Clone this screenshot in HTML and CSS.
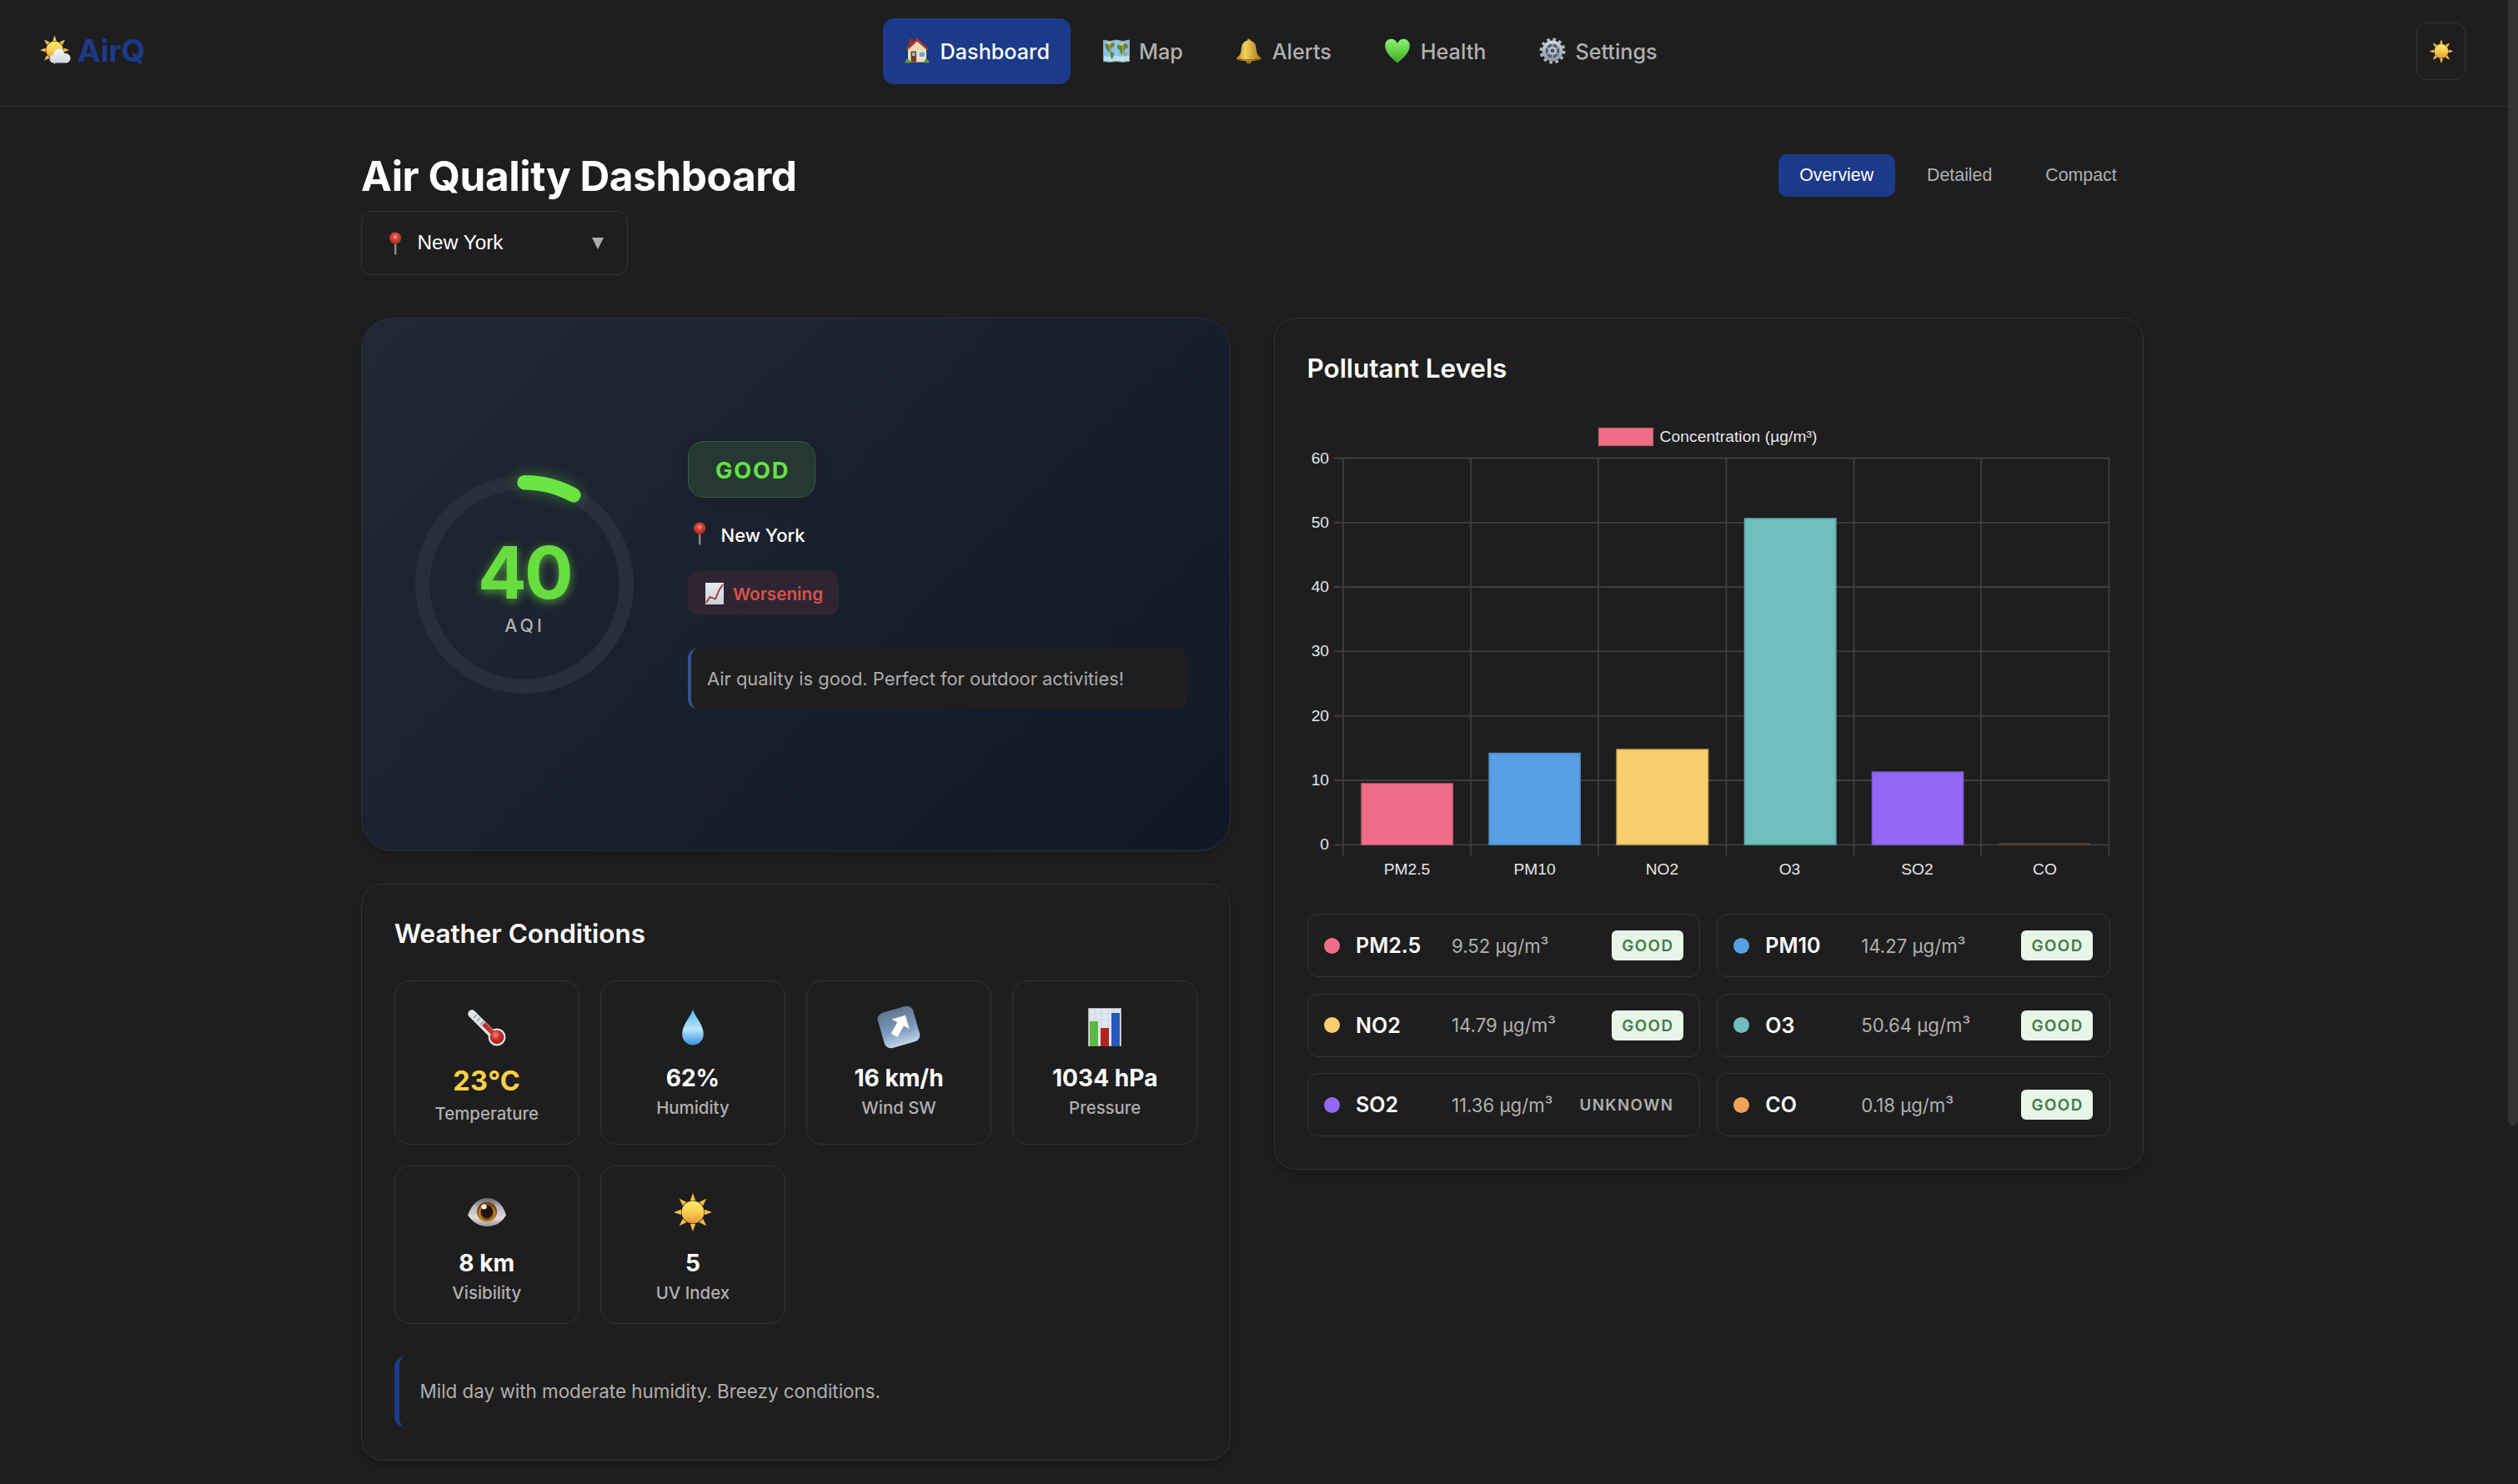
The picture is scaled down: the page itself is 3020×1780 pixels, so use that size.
FILE: index.html
```
<!DOCTYPE html>
<html lang="en">
<head>
<meta charset="utf-8">
<title>AirQ - Air Quality Dashboard</title>
<link rel="stylesheet" href="styles.css">
</head>
<body>
<svg class="defs" width="0" height="0" aria-hidden="true">
  <defs>
    <linearGradient id="sunFill" x1="0" y1="0" x2="0" y2="1"><stop offset="0" stop-color="#fdea6c"/><stop offset=".5" stop-color="#f8cf4f"/><stop offset="1" stop-color="#e8943a"/></linearGradient>
    <linearGradient id="cloudFill" x1="0" y1="0" x2="0" y2="1"><stop offset="0" stop-color="#f6f8fa"/><stop offset="1" stop-color="#cfd6df"/></linearGradient>
    <linearGradient id="bellFill" x1="0" y1="0" x2="1" y2="0"><stop offset="0" stop-color="#b8871f"/><stop offset=".35" stop-color="#f1d15a"/><stop offset="1" stop-color="#a87718"/></linearGradient>
    <linearGradient id="heartFill" x1="0" y1="0" x2="0" y2="1"><stop offset="0" stop-color="#8cf07a"/><stop offset=".5" stop-color="#63d148"/><stop offset="1" stop-color="#41a52c"/></linearGradient>
    <linearGradient id="gearFill" x1="0" y1="0" x2="0" y2="1"><stop offset="0" stop-color="#c9d2dc"/><stop offset="1" stop-color="#8d97a3"/></linearGradient>
    <radialGradient id="pinFill" cx=".5" cy=".4" r=".6"><stop offset="0" stop-color="#f7a79c"/><stop offset=".35" stop-color="#dc4c40"/><stop offset="1" stop-color="#9c2620"/></radialGradient>
    <radialGradient id="bulbFill" cx=".4" cy=".35" r=".65"><stop offset="0" stop-color="#f58a80"/><stop offset=".5" stop-color="#cf2f2c"/><stop offset="1" stop-color="#9c1d1c"/></radialGradient>
    <linearGradient id="dropFill" x1="0" y1="0" x2="0" y2="1"><stop offset="0" stop-color="#4fb0ee"/><stop offset=".55" stop-color="#b9e6fb"/><stop offset="1" stop-color="#3a93e6"/></linearGradient>
    <linearGradient id="tileFill" x1="0" y1="0" x2="0" y2="1"><stop offset="0" stop-color="#61778f"/><stop offset=".6" stop-color="#7f9cc0"/><stop offset="1" stop-color="#c4d6ea"/></linearGradient>
    <linearGradient id="paperFill" x1="0" y1="0" x2="0" y2="1"><stop offset="0" stop-color="#e6ecf4"/><stop offset="1" stop-color="#c9d0d8"/></linearGradient>
    <linearGradient id="eyeFill" x1="0" y1="0" x2="0" y2="1"><stop offset="0" stop-color="#67636c"/><stop offset=".3" stop-color="#b8b1b9"/><stop offset=".7" stop-color="#e2dadf"/><stop offset="1" stop-color="#9d949b"/></linearGradient>
    <radialGradient id="irisFill" cx=".5" cy=".6" r=".5"><stop offset=".4" stop-color="#4b2413"/><stop offset=".75" stop-color="#c48c22"/><stop offset="1" stop-color="#6f4310"/></radialGradient>
    <symbol id="sun" viewBox="0 0 48 48">
      <g fill="#f3be48"><path d="M24 1l3.200 9h-6.400z"/><path d="M24 1l3.200 9h-6.400z" transform="rotate(45 24 24)"/><path d="M24 1l3.200 9h-6.400z" transform="rotate(90 24 24)"/><path d="M24 1l3.200 9h-6.400z" transform="rotate(135 24 24)"/><path d="M24 1l3.200 9h-6.400z" transform="rotate(180 24 24)"/><path d="M24 1l3.200 9h-6.400z" transform="rotate(225 24 24)"/><path d="M24 1l3.200 9h-6.400z" transform="rotate(270 24 24)"/><path d="M24 1l3.200 9h-6.400z" transform="rotate(315 24 24)"/></g>
      <circle cx="24" cy="24" r="13.500" fill="url(#sunFill)"/>
    </symbol>
    <symbol id="pin" viewBox="0 0 16 28">
      <rect x="7" y="12" width="2.400" height="15.500" rx="1" fill="#948a83"/>
      <circle cx="8.100" cy="7.600" r="7.200" fill="url(#pinFill)"/>
    </symbol>
  </defs>
</svg>

<header class="topbar">
  <a class="logo">
    <svg class="logo-icon" viewBox="0 0 37 37">
      <svg x="-1" y="-1" width="37" height="38"><use href="#sun"/></svg>
      <path d="M17 33.500c-3.500 0-5.500-2.200-5.500-5 0-2.900 2.200-4.900 4.700-5 .2-4 2.800-7 6.600-7 3.300 0 5.600 2.100 6.300 5.200 4.100-.1 7.400 2.400 7.400 6 0 3.500-2.600 5.800-6 5.800z" fill="url(#cloudFill)"/>
    </svg>
    <span class="logo-text">AirQ</span>
  </a>
  <nav class="nav">
    <a class="nav-item active">
      <svg class="nav-icon" viewBox="0 0 32 32">
        <path d="M6 2h5v9H6z" fill="#8f3227"/>
        <path d="M5 14L16 4l11 10v15.500H5z" fill="#ecdcbb"/>
        <path d="M16 .800L2.500 13.800l1.800 1.500L16 4.800l12 10.500 1.600-1.500z" fill="#b23a2c"/>
        <path d="M8.500 16.500H15v13H8.500z" fill="#74402c"/><path d="M10 18h3.500v4H10z" fill="#9dbbd0"/>
        <path d="M17.500 16.500H26v7.500h-8.500z" fill="#fff3df"/><path d="M18.500 17.500H25V23h-6.500z" fill="#6fa4d8"/>
        <path d="M1.500 30.500c0-3 1.800-5 3.600-4.600 1.600.3 2.400 2 2.400 4.600zM24.500 30.500c0-3 1.200-4.900 3-4.600 1.900.3 3.200 2 3.200 4.600z" fill="#5c9a34"/>
      </svg>
      <span>Dashboard</span>
    </a>
    <a class="nav-item">
      <svg class="nav-icon" viewBox="0 0 32 32">
        <path d="M.500 3l7.700 1.500L16 3l7.800 1.500L31.500 3v25.500l-7.700.8-7.800-.8-7.800.8-7.700-.8z" fill="#7cc4ee"/>
        <path d="M.500 22l7.700 1 7.800-1 7.800 1 7.700-1v6.500l-7.700.8-7.800-.8-7.800.8-7.700-.8z" fill="#b5e3f8"/>
        <path d="M2 8l6-2 6 1-1 4-3 1-1 4 4 3-1 5-2 2-2-7-4-5zM17 9l6-3 6 2 1 4-4 2-1 4-3 3-2-6-3-2z" fill="#6f7f2c"/>
        <path d="M3 6l5-1 3 1-4 3zM18 8l5-2 3 1-4 3z" fill="#c9c9a4"/>
        <circle cx="26.500" cy="20" r="2" fill="#df8b32"/>
        <path d="M8.200 4.500v24.800M16 3v25.500M23.800 4.500v24.800" stroke="#dcecf4" stroke-width=".8" opacity=".7"/>
        <path d="M.500 3l7.700 1.500L16 3l7.800 1.500L31.500 3v25.500l-7.700.8-7.800-.8-7.800.8-7.700-.8z" fill="none" stroke="#a99f89" stroke-width="1"/>
      </svg>
      <span>Map</span>
    </a>
    <a class="nav-item">
      <svg class="nav-icon" viewBox="0 0 32 32">
        <circle cx="15.800" cy="3.500" r="2" fill="#c79a31"/>
        <circle cx="15.800" cy="28" r="3.400" fill="#a0701a"/>
        <path d="M15.800 3.500c5.600 0 8.600 4.300 9 10 .3 5 1.200 7.700 5.600 11 1 1.800-4.600 3.500-14.600 3.500S.200 26.300 1.200 24.500c4.400-3.300 5.300-6 5.600-11 .4-5.700 3.400-10 9-10z" fill="url(#bellFill)"/>
        <path d="M3.500 25.300c5 2.200 19.600 2.200 24.600 0" fill="none" stroke="#80590f" stroke-width="1.200"/>
      </svg>
      <span>Alerts</span>
    </a>
    <a class="nav-item">
      <svg class="nav-icon" viewBox="0 0 32 32">
        <path d="M16 30.500C8.500 24.500 1.200 17.800 1.200 9.800c0-4.600 3.200-8 7.300-8 3.300 0 6 1.900 7.500 5.100 1.500-3.200 4.200-5.100 7.500-5.100 4.100 0 7.300 3.400 7.300 8 0 8-7.300 14.700-14.800 20.700z" fill="url(#heartFill)"/>
      </svg>
      <span>Health</span>
    </a>
    <a class="nav-item">
      <svg class="nav-icon" viewBox="0 0 32 32">
        <circle cx="16" cy="16" r="13.600" fill="none" stroke="#aeb8c3" stroke-width="3.800" stroke-dasharray="3.560 3.560"/>
        <circle cx="16" cy="16" r="10.400" fill="none" stroke="url(#gearFill)" stroke-width="4.200"/>
        <circle cx="16" cy="16" r="8" fill="#59626d"/>
        <path d="M16 8v16M9 12l14 8M23 12L9 20" stroke="#a3adb8" stroke-width="1.600"/>
        <circle cx="16" cy="16" r="5" fill="#b8c1cc"/><circle cx="16" cy="16" r="2.400" fill="#4a525c"/>
      </svg>
      <span>Settings</span>
    </a>
  </nav>
  <button class="theme-toggle" aria-label="Theme"><svg width="30" height="31"><use href="#sun"/></svg></button>
</header>

<main class="main">
  <div class="page-head">
    <div class="page-title">
      <h1>Air Quality Dashboard</h1>
      <div class="select">
        <svg class="pin" width="16" height="28"><use href="#pin"/></svg>
        <span class="select-value">New York</span>
        <svg class="caret" viewBox="0 0 14 14"><path d="M0 0h14L7 14z" fill="#aeaeae"/></svg>
      </div>
    </div>
    <div class="tabs">
      <button class="tab active">Overview</button>
      <button class="tab">Detailed</button>
      <button class="tab">Compact</button>
    </div>
  </div>

  <div class="grid">
    <div class="column">
      <section class="card aqi">
        <div class="gauge">
          <svg class="ring" viewBox="0 0 262 262">
            <circle cx="131" cy="131" r="122.300" fill="none" stroke="#282e3b" stroke-width="17.400"/>
            <path class="ring-value" d="M131 8.700A122.300 122.300 0 0 1 189.900 23.800" fill="none" stroke="#6ae544" stroke-width="17.400" stroke-linecap="round"/>
          </svg>
          <div class="gauge-label">
            <div class="aqi-number">40</div>
            <div class="aqi-unit">AQI</div>
          </div>
        </div>
        <div class="aqi-details">
          <div class="level">GOOD</div>
          <div class="place"><svg class="pin" width="16" height="28"><use href="#pin"/></svg><span>New York</span></div>
          <div class="trend">
            <svg class="trend-icon" viewBox="0 0 22 26"><rect width="22" height="26" fill="url(#paperFill)"/><path d="M1 24l4.500-7 6.500 2.500L16.500 9 21 2" fill="none" stroke="#a8322b" stroke-width="1.800"/></svg>
            <span>Worsening</span>
          </div>
          <div class="advice">Air quality is good. Perfect for outdoor activities!</div>
        </div>
      </section>

      <section class="card weather">
        <h2>Weather Conditions</h2>
        <div class="tiles">
          <div class="tile temp">
            <svg class="tile-icon" viewBox="0 0 48 48">
              <path d="M6 8L32 34" stroke="#dde2e8" stroke-width="9.500" stroke-linecap="round"/>
              <circle cx="36" cy="36" r="10.500" fill="#dde2e8"/>
              <path d="M20 20L34 34" stroke="#c3322e" stroke-width="5.500"/>
              <path d="M8 13l4-4M12 17l4-4M16 21l4-4" stroke="#8a9098" stroke-width="1.200"/>
              <circle cx="36" cy="36" r="8.300" fill="url(#bulbFill)"/>
            </svg>
            <div class="tile-value">23°C</div><div class="tile-label">Temperature</div>
          </div>
          <div class="tile">
            <svg class="tile-icon" viewBox="0 0 48 48"><path d="M24 2.500c2 8.500 12.800 18.500 12.800 29.500 0 8-5.700 13.500-12.800 13.500S11.200 40 11.200 32C11.200 21 22 11 24 2.500z" fill="url(#dropFill)"/></svg>
            <div class="tile-value">62%</div><div class="tile-label">Humidity</div>
          </div>
          <div class="tile">
            <svg class="tile-icon wide" viewBox="0 0 54 54">
              <g transform="rotate(-16 27 27)"><rect x="5" y="5" width="44" height="44" rx="8" fill="url(#tileFill)"/><path d="M38.500 15.500v17l-5.400-5.400-11 11-6.200-6.200 11-11-5.400-5.400z" fill="#fff"/></g>
            </svg>
            <div class="tile-value">16 km/h</div><div class="tile-label">Wind SW</div>
          </div>
          <div class="tile">
            <svg class="tile-icon" viewBox="0 0 48 48">
              <rect x="4" y="1" width="40" height="46" fill="#dfe7f1"/><path d="M4 8h40M4 15h40M4 22h40M4 29h40M4 36h40M12 1v46M20 1v46M28 1v46M36 1v46" stroke="#c6d0dd" stroke-width=".7"/>
              <rect x="4.500" y="1.500" width="39" height="45" fill="none" stroke="#b0a7a5"/>
              <rect x="6" y="17" width="10" height="30" fill="#58b944"/><rect x="19" y="25" width="10" height="22" fill="#b0261e"/><rect x="32" y="7" width="10" height="40" fill="#2459bd"/>
            </svg>
            <div class="tile-value">1034 hPa</div><div class="tile-label">Pressure</div>
          </div>
          <div class="tile">
            <svg class="tile-icon" viewBox="0 0 48 48">
              <path d="M1 27.500C6 14 14 7 24.500 7S43 14 47 27.500C42 36 34.500 41 24.500 41S7 36 1 27.500z" fill="url(#eyeFill)"/>
              <circle cx="24" cy="23.500" r="12" fill="url(#irisFill)"/><circle cx="24" cy="23" r="7.400" fill="#25120f"/><ellipse cx="20.500" cy="17.500" rx="3.300" ry="3" fill="#f1edf0"/>
            </svg>
            <div class="tile-value">8 km</div><div class="tile-label">Visibility</div>
          </div>
          <div class="tile">
            <svg class="tile-icon" viewBox="0 0 48 48"><use href="#sun"/></svg>
            <div class="tile-value">5</div><div class="tile-label">UV Index</div>
          </div>
        </div>
        <div class="summary">Mild day with moderate humidity. Breezy conditions.</div>
      </section>
    </div>

    <section class="card pollutants">
      <h2>Pollutant Levels</h2>
      <svg class="chart" viewBox="1567.500 500 963 563">
        <rect x="1917" y="513.500" width="65" height="21" fill="#ef6e87" stroke="#bb5a6e" stroke-width="1.200"/>
        <text x="1990" y="530.300" textLength="189">Concentration (µg/m³)</text>
        <g stroke="#3e3e3e" stroke-width="1.800">
          <path d="M1599 549.500H2529M1599 626.800H2529M1599 704H2529M1599 781.300H2529M1599 858.700H2529M1599 936H2529M1599 1013.300H2529"/>
          <path d="M1610.500 549V1026M1763.500 549V1026M1916.500 549V1026M2070 549V1026M2223 549V1026M2375.500 549V1026M2529 549V1026"/>
        </g>
        <g class="ticks">
          <text x="1593.500" y="555.500">60</text><text x="1593.500" y="632.700">50</text><text x="1593.500" y="710">40</text><text x="1593.500" y="787.200">30</text><text x="1593.500" y="864.500">20</text><text x="1593.500" y="941.800">10</text><text x="1593.500" y="1019.200">0</text>
        </g>
        <g stroke-width="1.600">
          <path d="M1632.600 1013V940H1741.600V1013z" fill="#ef6e87" stroke="#cf6278"/>
          <path d="M1785.600 1013V903.600H1894.600V1013z" fill="#589fe4" stroke="#4f8bc6"/>
          <path d="M1938.600 1013V899H2048V1013z" fill="#f7cf6c" stroke="#c7a95d"/>
          <path d="M2092 1013V622H2201.400V1013z" fill="#6fbec0" stroke="#62a5a7"/>
          <path d="M2245 1013V926H2354V1013z" fill="#9268f5" stroke="#7f5dd0"/>
          <path d="M2397 1012H2507" stroke="#584634"/>
        </g>
        <g class="names">
          <text x="1687" y="1049">PM2.5</text><text x="1840" y="1049">PM10</text><text x="1993" y="1049">NO2</text><text x="2146" y="1049">O3</text><text x="2299" y="1049">SO2</text><text x="2452" y="1049">CO</text>
        </g>
      </svg>
      <div class="list">
        <div class="row"><i class="dot pink"></i><b>PM2.5</b><span class="amount">9.52 µg/m³</span><em class="badge good">GOOD</em></div>
        <div class="row"><i class="dot blue"></i><b>PM10</b><span class="amount">14.27 µg/m³</span><em class="badge good">GOOD</em></div>
        <div class="row"><i class="dot yellow"></i><b>NO2</b><span class="amount">14.79 µg/m³</span><em class="badge good">GOOD</em></div>
        <div class="row"><i class="dot teal"></i><b>O3</b><span class="amount">50.64 µg/m³</span><em class="badge good">GOOD</em></div>
        <div class="row"><i class="dot purple"></i><b>SO2</b><span class="amount">11.36 µg/m³</span><em class="badge">UNKNOWN</em></div>
        <div class="row"><i class="dot orange"></i><b>CO</b><span class="amount">0.18 µg/m³</span><em class="badge good">GOOD</em></div>
      </div>
    </section>
  </div>
</main>
<div class="scroll-thumb"></div>
</body>
</html>
```

FILE: styles.css
```
* { box-sizing: border-box; }
html, body { height: 100%; }
body {
  margin: 0;
  overflow: hidden;
  background: #1e1e1e;
  color: #fff;
  font-family: Inter, "Liberation Sans", sans-serif;
}
h1, h2 { margin: 0; }
svg { display: block; flex: none; }
.defs { position: absolute; }
button { border: 0; padding: 0; background: none; font: inherit; }

.topbar {
  display: flex;
  align-items: center;
  justify-content: space-between;
  width: 3008px;
  height: 128px;
  padding: 0 51px 4px 48px;
  border-bottom: 1px solid #333;
}
.logo { display: flex; align-items: center; gap: 8px; margin-top: -2px; }
.logo-icon { width: 37px; height: 37px; }
.logo-text { color: #1b3a8a; font-size: 37px; font-weight: 700; line-height: 50px; letter-spacing: -0.2px; }
.nav { display: flex; gap: 12.800px; }
.nav-item {
  display: flex;
  align-items: center;
  gap: 11.400px;
  height: 79px;
  padding: 0 25.400px;
  border-radius: 13px;
  color: #b0b0b0;
  font-size: 25.200px;
  font-weight: 500;
}
.nav-item.active { background: #1b3a8a; color: #fff; }
.nav-icon { width: 32px; height: 32px; margin-top: -2px; }
.theme-toggle {
  display: flex;
  align-items: center;
  justify-content: center;
  width: 59px;
  height: 69px;
  border: 1px solid #333;
  border-radius: 13px;
}

.main { width: 2137.500px; margin-left: 433px; padding-top: 52px; }
.page-head { display: flex; justify-content: space-between; align-items: flex-start; margin-bottom: 51px; }
.page-title { display: flex; flex-direction: column; gap: 11px; }
h1 { font-size: 49.500px; line-height: 62px; font-weight: 700; letter-spacing: -0.450px; }
.select {
  display: flex;
  align-items: center;
  width: 320px;
  height: 77px;
  padding: 0 28.500px 0 32px;
  border: 1px solid #333;
  border-radius: 13px;
  font-family: "Liberation Sans", sans-serif;
  font-size: 24.400px;
}
.select-value { margin: -2px 0 0 18.500px; }
.caret { width: 14px; height: 14px; margin-left: auto; }
.tabs {
  display: flex;
  gap: 13px;
  padding: 5px 6.300px 0 0;
  font-family: "Liberation Sans", sans-serif;
  font-size: 21.330px;
}
.tab { height: 51px; padding: 0 25.500px; border-radius: 10px; color: #b0b0b0; }
.tab.active { background: #1b3a8a; color: #fff; }

.grid { display: grid; grid-template-columns: 1043px 1043px; gap: 51.500px; align-items: start; }
.column { display: flex; flex-direction: column; gap: 39px; }
.card {
  border: 1px solid #333;
  border-radius: 26px;
  background: #1e1e1e;
  box-shadow: 0 6px 10px rgba(0, 0, 0, .2);
}
.card h2 { font-size: 31.500px; line-height: 49px; font-weight: 600; letter-spacing: -.05px; }

.aqi {
  display: flex;
  align-items: center;
  gap: 65px;
  height: 640px;
  padding: 0 51px 0 64px;
  border-color: #2b303b;
  border-radius: 38px;
  background: linear-gradient(135deg, #212934, #1a1f2e 50%, #111727);
}
.gauge { display: grid; width: 262px; height: 262px; flex: none; }
.gauge > * { grid-area: 1 / 1; }
.ring { width: 262px; height: 262px; overflow: visible; }
.ring-value { filter: drop-shadow(0 0 9px rgba(106, 229, 68, .4)); }
.gauge-label { display: flex; flex-direction: column; align-items: center; padding-top: 68px; }
.aqi-number {
  color: #68dd40;
  font-size: 87px;
  line-height: 98px;
  font-weight: 700;
  letter-spacing: -2.700px;
  text-shadow: 0 3px 12px rgba(104, 221, 64, .65);
}
.aqi-unit { padding-left: 1px; color: #b0b0b0; font-size: 21.300px; line-height: 28px; font-weight: 500; letter-spacing: 4px; }
.aqi-details { display: flex; flex-direction: column; align-items: flex-start; flex: 1; padding-bottom: 22px; }
.level {
  height: 68px;
  padding: 0 30px 0 32px;
  border: 1px solid #31603a;
  border-radius: 19px;
  background: #263834;
  box-shadow: 0 6px 18px rgba(0, 0, 0, .1);
  color: #68e044;
  font-size: 27.200px;
  line-height: 69px;
  font-weight: 700;
  letter-spacing: 1.800px;
}
.place { display: flex; align-items: center; gap: 17.500px; height: 44px; margin: 23px 0 21px; padding-left: 6px; font-size: 22px; font-weight: 500; }
.place .pin { margin-top: -4px; }
.trend {
  display: flex;
  align-items: center;
  gap: 11px;
  height: 53px;
  padding: 0 18.500px 0 21px;
  border-radius: 13px;
  background: #2f2432;
  color: #dd5049;
  font-size: 20.700px;
  line-height: 26px;
  font-weight: 600;
}
.trend span { padding-top: 2px; }
.trend-icon { width: 22px; height: 26px; }
.advice {
  width: 100%;
  height: 74px;
  margin-top: 39px;
  padding-left: 19px;
  border-left: 4px solid #34508f;
  border-radius: 13px;
  background: #1e1e1e;
  color: #adadad;
  font-size: 21.900px;
  line-height: 74px;
}

.weather { height: 692px; padding: 34px 39px 0; }
.tiles { display: grid; grid-template-columns: repeat(4, 1fr); gap: 25.600px; margin-top: 32px; }
.tile {
  display: flex;
  flex-direction: column;
  align-items: center;
  padding: 31px 0 22.500px;
  border: 1px solid #333;
  border-radius: 19px;
}
.tile-icon { width: 48px; height: 48px; }
.tile-icon.wide { width: 54px; height: 54px; margin: -3px 0; }
.tile-value { margin: 20px 0 6px; font-size: 28.100px; line-height: 34px; font-weight: 700; }
.temp .tile-value { color: #ffd04a; font-size: 32.500px; line-height: 41px; letter-spacing: .3px; }
.tile-label { color: #b0b0b0; font-size: 20.400px; line-height: 26px; font-weight: 500; }
.summary {
  height: 85px;
  margin-top: 39px;
  padding-left: 24.500px;
  border-left: 6px solid #1b3a8a;
  border-radius: 13px;
  color: #b0b0b0;
  font-size: 22.400px;
  line-height: 84.500px;
}

.pollutants { padding: 35px 39px 39px; }
.chart { width: 963px; height: 563px; margin-top: 34px; font-family: "Liberation Sans", sans-serif; font-size: 19.200px; fill: #e6e6e6; }
.ticks { text-anchor: end; }
.names { text-anchor: middle; }
.list { display: grid; grid-template-columns: repeat(2, 1fr); gap: 19.500px; margin-top: 33px; }
.row {
  display: flex;
  align-items: center;
  height: 76px;
  padding: 0 19.500px 0 19px;
  border: 1px solid #333;
  border-radius: 13px;
}
.dot { width: 19px; height: 19px; border-radius: 50%; }
.pink { background: #ef6e87; }
.blue { background: #589fe4; }
.yellow { background: #f7cf6c; }
.teal { background: #6fbec0; }
.purple { background: #9268f5; }
.orange { background: #f3a354; }
.row b { width: 96px; margin: 0 19px 0 19.500px; font-size: 25px; font-weight: 600; }
.amount { color: #b0b0b0; font-size: 22.200px; }
.badge {
  height: 36px;
  margin-left: auto;
  padding: 0 11.400px 0 12.500px;
  border-radius: 6px;
  color: #b0b0b0;
  font-size: 18.800px;
  line-height: 37px;
  font-style: normal;
  font-weight: 600;
  letter-spacing: 1.400px;
}
.badge.good { background: #e8f5e9; color: #407f43; }

.scroll-thumb {
  position: fixed;
  top: 0;
  right: 0;
  width: 12px;
  height: 1350px;
  border-radius: 0 0 6px 6px;
  background: #333;
}
```
